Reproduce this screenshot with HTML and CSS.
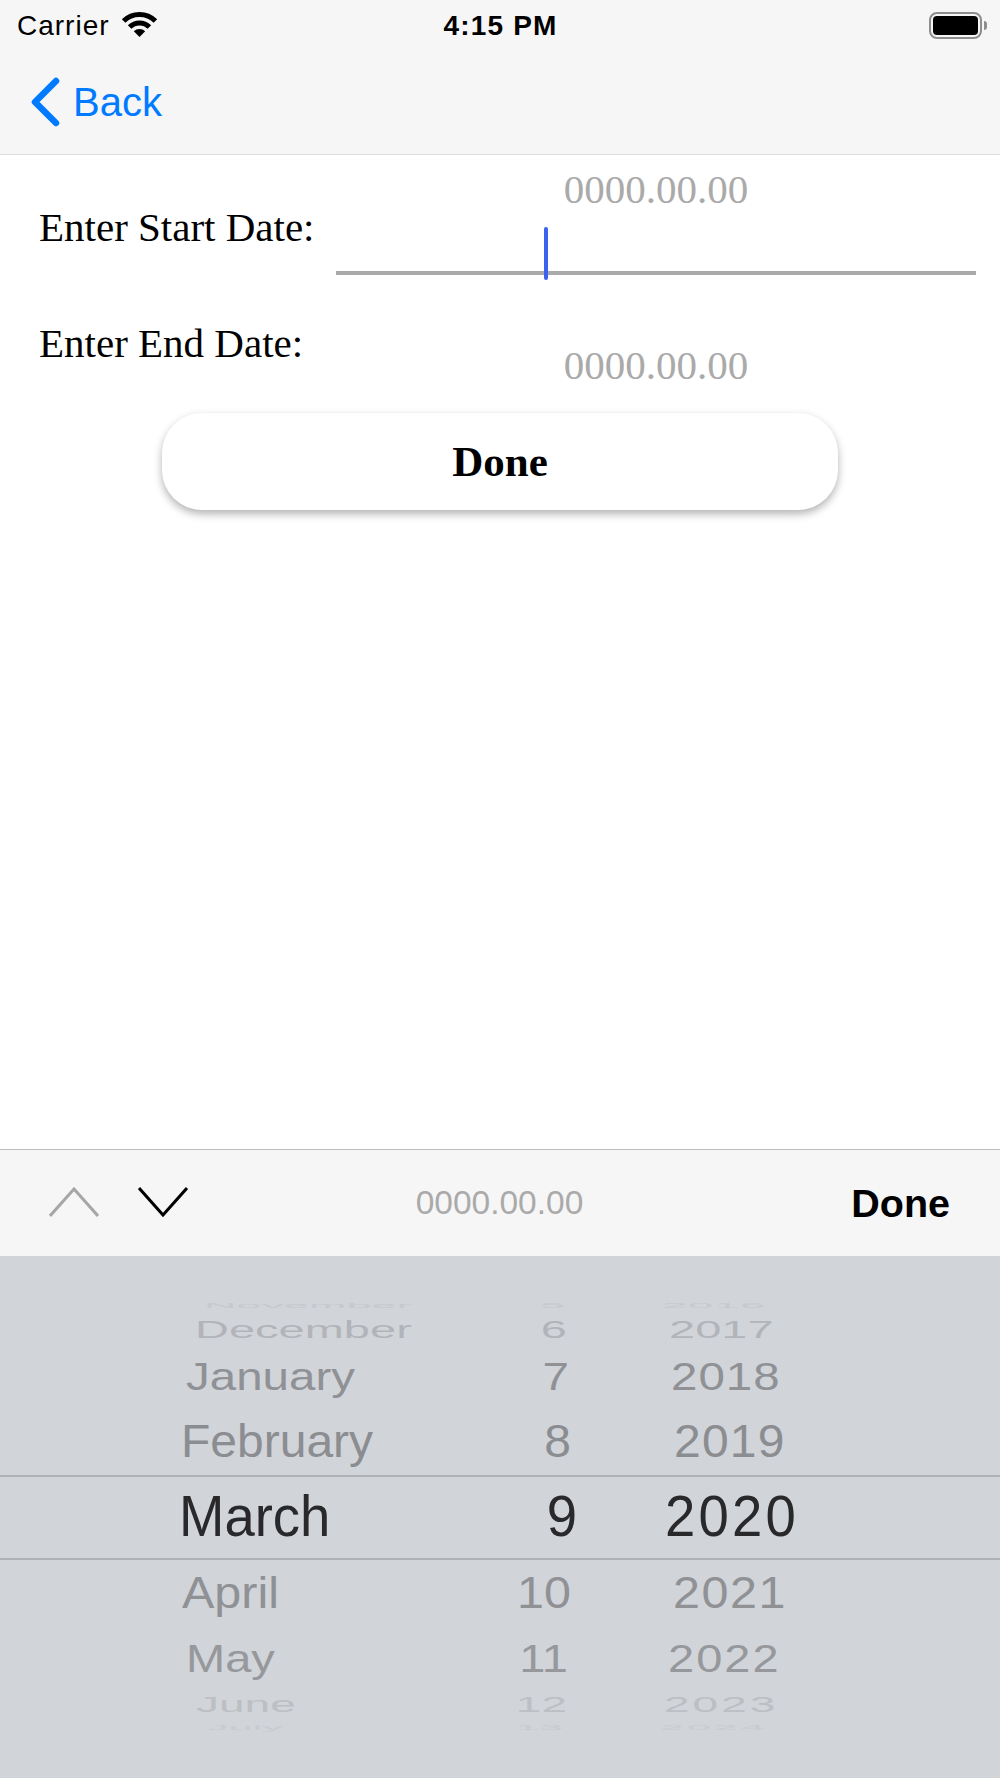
FILE: index.html
```html
<!DOCTYPE html>
<html lang="en">
  <head>
    <meta charset="UTF-8" />
    <meta name="viewport" content="width=device-width, initial-scale=1.0" />
    <title>Enter Dates</title>
    <link rel="stylesheet" href="styles.css">
  </head>
  <body>
    <div class="screen">
      <header class="top">
        <div class="status">
          <div class="carrier">
            <span>Carrier</span>
            <svg class="wifi" width="37" height="27" viewBox="0 0 37 27">
              <path d="M2.6 11.1A22.5 22.5 0 0 1 34.4 11.1" fill="none" stroke="#000" stroke-width="5" />
              <path d="M8.6 17.1A14 14 0 0 1 28.4 17.1" fill="none" stroke="#000" stroke-width="5" />
              <path d="M18.5 27L12.8 21.3A8 8 0 0 1 24.2 21.3Z" />
            </svg>
          </div>
          <div class="time">4:15 PM</div>
          <div class="battery">
            <div class="battery-body"><div class="battery-fill"></div></div>
            <div class="battery-nib"></div>
          </div>
        </div>
        <div class="nav">
          <svg class="back-arrow" width="30" height="50" viewBox="0 0 30 50">
            <path d="M26 4L5 25L26 46" fill="none" stroke="#007aff" stroke-width="6.5" stroke-linecap="round" stroke-linejoin="round" />
          </svg>
          <span class="back-label">Back</span>
        </div>
      </header>

      <main class="form">
        <div class="form-row first">
          <label class="date-label">Enter Start Date:</label>
          <div class="date-field active">
            <span class="placeholder">0000.00.00</span>
            <span class="caret"></span>
          </div>
        </div>
        <div class="form-row second">
          <label class="date-label">Enter End Date:</label>
          <div class="date-field">
            <span class="placeholder">0000.00.00</span>
          </div>
        </div>
        <button class="done-button">Done</button>
      </main>

      <div class="toolbar">
        <div class="toolbar-arrows">
          <svg width="50" height="30" viewBox="0 0 50 30">
            <path d="M1 29L25 2L49 29" fill="none" stroke="#a6a6a6" stroke-width="3" />
          </svg>
          <svg width="50" height="30" viewBox="0 0 50 30">
            <path d="M1 1L25 28L49 1" fill="none" stroke="#000" stroke-width="3" />
          </svg>
        </div>
        <div class="toolbar-value">0000.00.00</div>
        <div class="toolbar-done">Done</div>
      </div>

      <div class="picker">
        <div class="wheel-row row-1"><span class="month"><i>November</i></span><span class="day"><i>5</i></span><span class="year"><i>2016</i></span></div>
        <div class="wheel-row row-2"><span class="month"><i>December</i></span><span class="day"><i>6</i></span><span class="year"><i>2017</i></span></div>
        <div class="wheel-row row-3"><span class="month"><i>January</i></span><span class="day"><i>7</i></span><span class="year"><i>2018</i></span></div>
        <div class="wheel-row row-4"><span class="month"><i>February</i></span><span class="day"><i>8</i></span><span class="year"><i>2019</i></span></div>
        <div class="wheel-row row-5"><span class="month"><i>March</i></span><span class="day"><i>9</i></span><span class="year"><i>2020</i></span></div>
        <div class="wheel-row row-6"><span class="month"><i>April</i></span><span class="day"><i>10</i></span><span class="year"><i>2021</i></span></div>
        <div class="wheel-row row-7"><span class="month"><i>May</i></span><span class="day"><i>11</i></span><span class="year"><i>2022</i></span></div>
        <div class="wheel-row row-8"><span class="month"><i>June</i></span><span class="day"><i>12</i></span><span class="year"><i>2023</i></span></div>
        <div class="wheel-row row-9"><span class="month"><i>July</i></span><span class="day"><i>13</i></span><span class="year"><i>2024</i></span></div>
      </div>
    </div>
  </body>
</html>
```

FILE: styles.css
```css
* {
  box-sizing: border-box;
}
body {
  margin: 0;
  background: white;
  font-family: "Liberation Sans", Arial, sans-serif;
}
.screen {
  width: 1000px;
  height: 1778px;
  display: flex;
  flex-direction: column;
  overflow: hidden;
}

/* status bar and nav */
.top {
  height: 155px;
  background-color: #f6f6f7;
  border-bottom: 1px solid #dcdcdc;
}
.status {
  height: 50px;
  padding: 2px 13px 0 17px;
  display: grid;
  grid-template-columns: 1fr 1fr 1fr;
  align-items: center;
}
.carrier {
  display: flex;
  align-items: center;
  gap: 11px;
  font-size: 28px;
  letter-spacing: 1px;
}
.wifi {
  margin-top: -5px;
}
.time {
  text-align: center;
  font-size: 28px;
  font-weight: bold;
  letter-spacing: 1.2px;
  padding-right: 3px;
}
.battery {
  display: flex;
  justify-content: flex-end;
  align-items: center;
  gap: 2px;
  margin-top: -2px;
}
.battery-body {
  width: 53px;
  height: 27px;
  padding: 2px;
  border: 2px solid #8e8e8e;
  border-radius: 8px;
}
.battery-fill {
  height: 100%;
  background: black;
  border-radius: 4px;
}
.battery-nib {
  width: 3px;
  height: 9px;
  background: #8e8e8e;
  border-radius: 0 3px 3px 0;
}
.nav {
  height: 104px;
  padding: 0 0 0 30px;
  display: flex;
  align-items: center;
  gap: 13px;
}
.back-label {
  font-size: 40px;
  color: #007aff;
}

/* form */
.form {
  flex: 1;
  font-family: "Liberation Serif", "Times New Roman", serif;
  font-size: 41px;
  line-height: 46px;
}
.form-row {
  display: grid;
  grid-template-columns: 336px 640px;
}
.date-label {
  padding-left: 39px;
}
.first .date-label {
  padding-top: 49px;
}
.second .date-label {
  padding-top: 45px;
}
.date-field {
  position: relative;
  text-align: center;
  color: #aaaaaa;
}
.active {
  height: 120px;
  padding-top: 11px;
  border-bottom: 4px solid #aaaaaa;
}
.second .date-field {
  padding-top: 67px;
}
.caret {
  position: absolute;
  left: 208px;
  top: 72px;
  width: 4px;
  height: 53px;
  background: #3c63ef;
  border-radius: 2px;
}
.done-button {
  display: block;
  width: 676px;
  height: 97px;
  margin: 25px 0 0 162px;
  background: white;
  border: none;
  border-radius: 40px;
  box-shadow: 0 4px 8px rgba(0, 0, 0, 0.3);
  font-family: inherit;
  font-size: 43px;
  font-weight: bold;
  color: black;
}

/* toolbar above the picker */
.toolbar {
  height: 107px;
  background-color: #f6f6f7;
  border-top: 1px solid #bdbdbd;
  display: grid;
  grid-template-columns: 1fr 1fr 1fr;
  align-items: center;
  padding: 0 50px 0 49px;
}
.toolbar-arrows {
  display: flex;
  gap: 39px;
  margin-top: -2px;
}
.toolbar-value {
  text-align: center;
  font-size: 33.5px;
  color: #aaaaaa;
}
.toolbar-done {
  text-align: right;
  font-size: 39.5px;
  font-weight: bold;
}

/* date wheel */
.picker {
  height: 522px;
  padding-top: 37px;
  background-color: #d1d4d9;
}
.wheel-row {
  display: grid;
  grid-template-columns: 480px 120px 1fr;
  font-size: var(--size);
  color: var(--color);
  height: var(--height);
  line-height: var(--line, var(--height));
}
.wheel-row i {
  display: inline-block;
  font-style: normal;
  transform: scaleY(var(--squash));
}
.month {
  padding-left: var(--month-x);
  white-space: nowrap;
}
.day {
  text-align: right;
  padding-right: var(--day-x);
}
.year {
  padding-left: var(--year-x);
  letter-spacing: var(--year-gap);
}
.row-1 { --size: 45px; --squash: 0.15; --color: #c6c9cd; --height: 25px; --month-x: 204px; --day-x: 35px; --year-x: 62px; --year-gap: 1px; }
.row-2 { --size: 47px; --squash: 0.5; --color: #b2b4b9; --height: 23px; --month-x: 195px; --day-x: 33px; --year-x: 69px; --year-gap: 0; }
.row-3 { --size: 47.5px; --squash: 0.8; --color: #8f9195; --height: 68px; --line: 72px; --month-x: 186px; --day-x: 31px; --year-x: 71px; --year-gap: 1px; }
.row-4 { --size: 48px; --squash: 0.96; --color: #8b8d91; --height: 66px; --month-x: 181px; --day-x: 29px; --year-x: 74px; --year-gap: 1.2px; }
.row-5 { --size: 54.5px; --squash: 1.05; --color: #29292b; --height: 85px; --line: 80px; --month-x: 179px; --day-x: 23px; --year-x: 65px; --year-gap: 3.2px; border-top: 2px solid #aeb1b5; border-bottom: 2px solid #aeb1b5; }
.row-6 { --size: 48.5px; --squash: 0.92; --color: #8f9195; --height: 65px; --month-x: 182px; --day-x: 29px; --year-x: 73px; --year-gap: 1.5px; }
.row-7 { --size: 47px; --squash: 0.84; --color: #96989c; --height: 67px; --month-x: 186px; --day-x: 32px; --year-x: 68px; --year-gap: 2px; }
.row-8 { --size: 46px; --squash: 0.46; --color: #bcbfc3; --height: 25px; --month-x: 196px; --day-x: 33px; --year-x: 64px; --year-gap: 3px; }
.row-9 { --size: 43px; --squash: 0.16; --color: #c8cbcf; --height: 21px; --month-x: 207px; --day-x: 37px; --year-x: 60px; --year-gap: 3px; }
```
